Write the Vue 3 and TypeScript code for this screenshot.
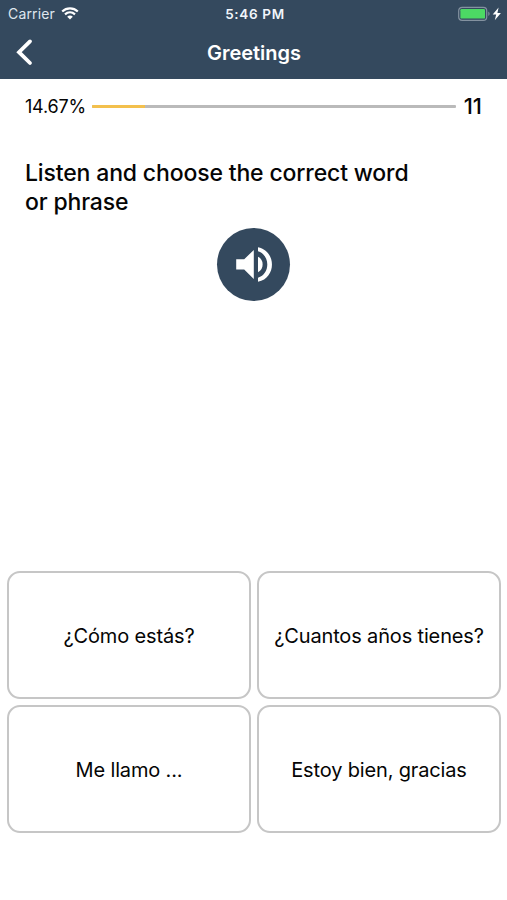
<script setup lang="ts">
import { ref } from 'vue'

interface Answer {
  id: string
  text: string
}

const progress = 14.67
const remaining = 11
const selected = ref<string | null>(null)

const answers: Answer[] = [
  { id: 'how', text: '¿Cómo estás?' },
  { id: 'age', text: '¿Cuantos años tienes?' },
  { id: 'name', text: 'Me llamo ...' },
  { id: 'fine', text: 'Estoy bien, gracias' },
]
</script>

<template>
  <div class="screen">
    <header class="header">
      <div class="status">
        <div class="network">
          <span class="carrier">Carrier</span>
          <svg class="wifi" width="18" height="13" viewBox="0 0 18 13" fill="none">
            <path d="M1.2 4.5C5.6.3 12.4.3 16.8 4.5M4 7.4c2.9-2.6 7.1-2.6 10 0" stroke="#fff" stroke-width="2.2" />
            <path d="M6.2 9.7c1.6-1.5 4-1.5 5.6 0L9 12.5z" fill="#fff" />
          </svg>
        </div>
        <span class="clock">5:46 PM</span>
        <div class="power">
          <svg width="44" height="16" viewBox="0 0 44 16" fill="none">
            <rect x=".7" y="1.3" width="28" height="13" rx="3.4" stroke="#8492a0" stroke-width="1.2" />
            <rect x="2.4" y="3" width="24.6" height="9.6" rx="1.2" fill="#4cd964" />
            <path d="M30.3 5.6c1.8.7 1.8 3.8 0 4.5z" fill="#8492a0" />
            <path d="M40.6 1.4l-5.9 7h3.5l-1.4 5.8 6.1-7.2h-3.5z" fill="#fff" />
          </svg>
        </div>
      </div>
      <nav class="nav">
        <button class="back" type="button" aria-label="Back">
          <svg width="18" height="28" viewBox="0 0 18 28" fill="none">
            <path d="M15 3.4L4 14.2 15 25" stroke="#fff" stroke-width="3.8" stroke-linecap="round" stroke-linejoin="miter" />
          </svg>
        </button>
        <h1 class="title">Greetings</h1>
      </nav>
    </header>

    <main class="lesson">
      <div class="progress">
        <span class="percent">{{ progress }}%</span>
        <div class="track">
          <div class="fill" :style="{ width: progress + '%' }"></div>
        </div>
        <span class="remaining">{{ remaining }}</span>
      </div>

      <h2 class="prompt">Listen and choose the correct word or phrase</h2>

      <button class="play" type="button" aria-label="Play audio">
        <svg width="73" height="73" viewBox="0 0 73 73" fill="#fff">
          <path d="M19.2 31.2h8L36.8 22v29l-9.6-9.4h-8z" />
          <path d="M41 28.8c6.2 2.7 6.2 12.7 0 15.4z" />
          <path d="M41 19.2c18.6 3.8 18.6 30.8 0 34.6v-4.1c12.4-3.7 12.4-22.7 0-26.4z" />
        </svg>
      </button>

      <div class="answers">
        <button
          v-for="answer in answers"
          :key="answer.id"
          type="button"
          class="answer"
          :aria-pressed="selected === answer.id"
          @click="selected = answer.id"
        >
          {{ answer.text }}
        </button>
      </div>
    </main>
  </div>
</template>

<style>
body {
  margin: 0;
  background: #fff;
}
</style>

<style scoped>
.screen {
  display: flex;
  flex-direction: column;
  width: 100%;
  height: 900px;
  overflow: hidden;
  background: #fff;
  color: #050505;
  font-family: Inter, 'Liberation Sans', sans-serif;
}

button {
  margin: 0;
  padding: 0;
  border: 0;
  background: none;
  color: inherit;
  font: inherit;
  cursor: pointer;
}

svg {
  display: block;
}

.header {
  box-sizing: border-box;
  flex: none;
  height: 79px;
  background: #34495e;
  color: #fff;
}

.status {
  display: grid;
  grid-template-columns: 1fr auto 1fr;
  align-items: center;
  height: 27px;
  padding: 0 5px 0 8px;
}

.network {
  display: flex;
  align-items: center;
  gap: 6px;
}

.carrier {
  color: #dfe6ee;
  font-size: 14px;
  letter-spacing: 0.15px;
}

.clock {
  color: #f1f5fa;
  font-size: 13.5px;
  font-weight: 600;
  letter-spacing: 0.65px;
}

.power {
  justify-self: end;
}

.nav {
  display: grid;
  grid-template-columns: 60px 1fr 60px;
  align-items: center;
  height: 50px;
}

.back {
  justify-self: start;
  padding-left: 15px;
}

.title {
  margin: 0;
  padding: 1px 0 0 1px;
  text-align: center;
  font-size: 20px;
  font-weight: 600;
  line-height: 24px;
}

.lesson {
  display: flex;
  flex: 1;
  flex-direction: column;
}

.progress {
  display: flex;
  align-items: center;
  height: 54px;
  padding: 0 25px;
}

.percent {
  width: 67px;
  font-size: 18px;
  letter-spacing: -0.2px;
}

.track {
  flex: 1;
  height: 3px;
  border-radius: 1px;
  background: #bababa;
  overflow: hidden;
}

.fill {
  height: 100%;
  background: #f3c04d;
}

.remaining {
  width: 26px;
  text-align: right;
  font-size: 22px;
  font-weight: 500;
}

.prompt {
  width: 400px;
  margin: 26px 0 0 25px;
  font-size: 23px;
  font-weight: 500;
  line-height: 29px;
  letter-spacing: -0.15px;
}

.play {
  align-self: center;
  width: 73px;
  height: 73px;
  margin-top: 11px;
  border-radius: 50%;
  background: #34495e;
}

.answers {
  display: grid;
  grid-template-columns: 1fr 1fr;
  grid-auto-rows: 128px;
  gap: 6px;
  margin-top: auto;
  padding: 0 6px 67px 7px;
}

.answer {
  padding-top: 2px;
  border: 2px solid #c6c6c6;
  border-radius: 13px;
  background: #fff;
  font-size: 20px;
  letter-spacing: -0.15px;
}
</style>
